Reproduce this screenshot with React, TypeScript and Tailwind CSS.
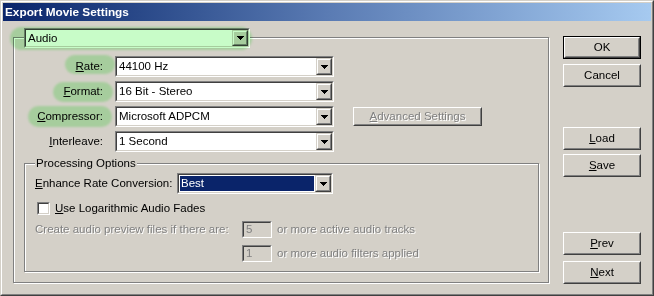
import React from "react";

const sunkenOuter = "border border-t-[#808080] border-l-[#808080] border-r-white border-b-white";
const sunkenInner = "border border-t-[#404040] border-l-[#404040] border-r-[#d4d0c8] border-b-[#d4d0c8]";
const raisedOuter = "border border-t-[#d4d0c8] border-l-[#d4d0c8] border-r-[#404040] border-b-[#404040]";
const raisedInner = "border border-t-white border-l-white border-r-[#808080] border-b-[#808080]";
const disabledText = "text-[#808080] [text-shadow:1px_1px_0_#fff]";

function Arrow() {
  return (
    <svg width="7" height="4" viewBox="0 0 7 4" shapeRendering="crispEdges">
      <rect x="0" y="0" width="7" height="1" fill="#000" />
      <rect x="1" y="1" width="5" height="1" fill="#000" />
      <rect x="2" y="2" width="3" height="1" fill="#000" />
      <rect x="3" y="3" width="1" height="1" fill="#000" />
    </svg>
  );
}

function ArrowBtn() {
  return (
    <div className={`w-[16px] h-full bg-[#d4d0c8] ${raisedOuter}`}>
      <div className={`w-full h-full flex items-center justify-center ${raisedInner}`}>
        <Arrow />
      </div>
    </div>
  );
}

function Combo({ className, children, selected }: { className: string; children: React.ReactNode; selected?: boolean }) {
  return (
    <div className={`${className} ${sunkenOuter}`}>
      <div className={`w-full h-full flex bg-white ${sunkenInner}`}>
        <div className="flex-1 flex items-center">
          {selected ? (
            <div className="h-[calc(100%-2px)] mx-[1px] flex-1 flex items-center bg-[#0a246a] text-white pl-[1px]">{children}</div>
          ) : (
            <div className="pl-[2px]">{children}</div>
          )}
        </div>
        <ArrowBtn />
      </div>
    </div>
  );
}

function Button({ children, className = "", def, disabled }: { children: React.ReactNode; className?: string; def?: boolean; disabled?: boolean }) {
  const inner = (
    <div className={`w-full h-full border border-t-white border-l-white border-r-[#404040] border-b-[#404040]`}>
      <div className={`w-full h-full flex items-center justify-center border border-t-[#d4d0c8] border-l-[#d4d0c8] border-r-[#808080] border-b-[#808080] ${disabled ? disabledText : ""}`}>
        {children}
      </div>
    </div>
  );
  if (def) {
    return <div className={`${className} border border-black`}>{inner}</div>;
  }
  return <div className={className}>{inner}</div>;
}

function U({ children }: { children: React.ReactNode }) {
  return <span className="underline underline-offset-[1px]">{children}</span>;
}

function Row({ label, children }: { label: React.ReactNode; children: React.ReactNode }) {
  return (
    <div className="flex items-center h-[21px]">
      <div className="w-[89px] text-right">{label}</div>
      <div className="ml-[12px] flex items-center">{children}</div>
    </div>
  );
}

function DisabledInput({ value }: { value: string }) {
  return (
    <div className={`w-[30px] h-[17px] ${sunkenOuter}`}>
      <div className={`w-full h-full bg-[#d4d0c8] flex items-center pl-[2px] ${sunkenInner} text-[#808080]`}>{value}</div>
    </div>
  );
}

export default function App() {
  return (
    <div className="relative w-[654px] h-[296px] bg-[#d4d0c8] font-['Liberation_Sans',Arial,sans-serif] text-[11.5px] leading-[13px] text-black overflow-hidden">
      <div className="w-full h-full border border-t-[#d4d0c8] border-l-[#d4d0c8] border-r-[#404040] border-b-[#404040]">
        <div className="w-full h-full border border-t-white border-l-white border-r-[#808080] border-b-[#808080] p-[1px] flex flex-col">
          {/* Title bar */}
          <div className="h-[18px] bg-linear-to-r from-[#0a246a] via-[#5a7bb3] to-[#a6caf0] flex items-center pl-[2px]">
            <span className="text-white font-bold text-[11.8px] leading-[14px]">Export Movie Settings</span>
          </div>
          {/* Body */}
          <div className="flex flex-1">
            {/* Left group */}
            <div className="ml-[10px] mt-[16px] w-[536px] h-[246px] border border-[#808080] shadow-[inset_1px_1px_0_#fff,1px_1px_0_#fff] flex flex-col">
              <div className="-mt-[10px] ml-[10px]">
                <Combo className="w-[226px] h-[20px]">Audio</Combo>
              </div>
              <div className="mt-[8px] flex flex-col gap-[4px]">
                <Row label={<><U>R</U>ate:</>}>
                  <Combo className="w-[219px] h-[21px]">44100 Hz</Combo>
                </Row>
                <Row label={<><U>F</U>ormat:</>}>
                  <Combo className="w-[219px] h-[21px]">16 Bit - Stereo</Combo>
                </Row>
                <Row label={<><U>C</U>ompressor:</>}>
                  <Combo className="w-[219px] h-[21px]">Microsoft ADPCM</Combo>
                  <Button disabled className="ml-[19px] w-[129px] h-[19px]">
                    <U>A</U>dvanced Settings
                  </Button>
                </Row>
                <Row label={<><U>I</U>nterleave:</>}>
                  <Combo className="w-[219px] h-[21px]">1 Second</Combo>
                </Row>
              </div>
              {/* Processing options */}
              <div className="ml-[10px] mt-[11px] w-[515px] h-[109px] border border-[#808080] shadow-[inset_1px_1px_0_#fff,1px_1px_0_#fff] flex flex-col">
                <div className="-mt-[7px] ml-[10px] self-start px-[1px] bg-[#d4d0c8] h-[13px]">Processing Options</div>
                <div className="mt-[3px] flex items-center pl-[10px]">
                  <div className="w-[142px]"><U>E</U>nhance Rate Conversion:</div>
                  <Combo className="w-[156px] h-[21px]" selected>Best</Combo>
                </div>
                <div className="mt-[8px] flex items-center pl-[12px] h-[13px]">
                  <div className={`w-[13px] h-[13px] ${sunkenOuter}`}>
                    <div className={`w-full h-full bg-white ${sunkenInner}`} />
                  </div>
                  <div className="ml-[5px]"><U>U</U>se Logarithmic Audio Fades</div>
                </div>
                <div className="mt-[6px] flex items-center pl-[10px] h-[17px]">
                  <div className={`w-[207px] whitespace-nowrap ${disabledText}`}>Create audio preview files if there are:</div>
                  <DisabledInput value="5" />
                  <div className={`ml-[5px] ${disabledText}`}>or more active audio tracks</div>
                </div>
                <div className="mt-[7px] flex items-center pl-[217px] h-[17px]">
                  <DisabledInput value="1" />
                  <div className={`ml-[5px] ${disabledText}`}>or more audio filters applied</div>
                </div>
              </div>
            </div>
            {/* Right buttons */}
            <div className="ml-[14px] flex flex-col">
              <Button def className="mt-[15px] w-[78px] h-[23px]">OK</Button>
              <Button className="mt-[5px] w-[78px] h-[23px]">Cancel</Button>
              <Button className="mt-[40px] w-[78px] h-[23px]"><U>L</U>oad</Button>
              <Button className="mt-[4px] w-[78px] h-[23px]"><U>S</U>ave</Button>
              <Button className="mt-[55px] w-[78px] h-[23px]"><U>P</U>rev</Button>
              <Button className="mt-[6px] w-[78px] h-[23px]"><U>N</U>ext</Button>
            </div>
          </div>
        </div>
      </div>
      {/* Green highlighter overlays */}
      <div className="pointer-events-none absolute left-[10px] top-[27px] w-[242px] h-[23px] rounded-[12px] bg-[#c8fcc8] mix-blend-multiply blur-[1px]" />
      <div className="pointer-events-none absolute left-[65px] top-[55px] w-[50px] h-[19px] rounded-full bg-[#c8fcc8] mix-blend-multiply blur-[1px]" />
      <div className="pointer-events-none absolute left-[53px] top-[82px] w-[60px] h-[20px] rounded-full bg-[#c8fcc8] mix-blend-multiply blur-[1px]" />
      <div className="pointer-events-none absolute left-[28px] top-[106px] w-[84px] h-[21px] rounded-full bg-[#c8fcc8] mix-blend-multiply blur-[1px]" />
    </div>
  );
}
